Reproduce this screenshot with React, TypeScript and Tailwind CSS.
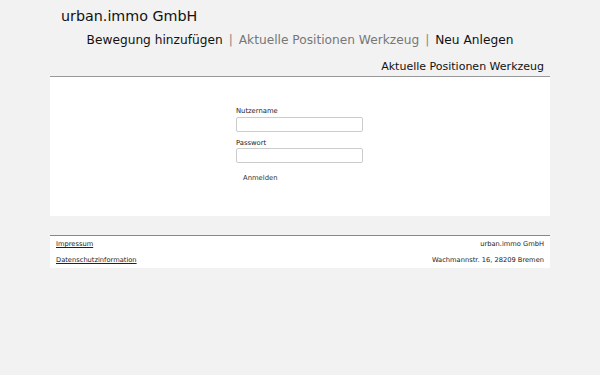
export default function App() {
  return (
    <div className="min-h-[375px] w-[600px] bg-[#f2f2f2] text-[#111] font-['DejaVu_Sans',sans-serif]">
      <div className="mx-auto w-[500px]">
        <header className="pt-[6px]">
          <h1 className="pl-[11px] text-[14.3px] leading-[20px]">urban.immo GmbH</h1>
          <nav className="mt-[5px] flex justify-center gap-[6px] text-[12.2px] leading-[18px]">
            <span>Bewegung hinzufügen</span>
            <span className="text-[#888]">|</span>
            <span className="text-[#777]">Aktuelle Positionen Werkzeug</span>
            <span className="text-[#888]">|</span>
            <span>Neu Anlegen</span>
          </nav>
          <div className="mt-[11px] pr-[6px] text-right text-[11px] leading-[14px]">
            Aktuelle Positionen Werkzeug
          </div>
        </header>

        <main className="mt-[2px] border-t border-[#999] bg-white">
          <form className="flex h-[139px] flex-col pl-[186px] pt-[30px] text-[6.8px] leading-[9px]">
            <label className="text-[#222]">Nutzername</label>
            <input className="mt-[1px] h-[15px] w-[127px] rounded-[2px] border border-[#ccc] bg-white" />
            <label className="mt-[7px] text-[#222]">Passwort</label>
            <input
              type="password"
              className="mt-0 h-[15px] w-[127px] rounded-[2px] border border-[#ccc] bg-white"
            />
            <button type="button" className="mt-[11px] w-fit pl-[7px] text-left text-[#333]">
              Anmelden
            </button>
          </form>
        </main>

        <footer className="mt-[19px] border-t border-[#888] bg-white px-[6px] pb-[2px] pt-[3px] text-[6.7px] leading-[9px] text-[#222]">
          <div className="flex justify-between py-[1px]">
            <a href="#" className="underline">Impressum</a>
            <span>urban.immo GmbH</span>
          </div>
          <div className="mt-[5px] flex justify-between py-[1px]">
            <a href="#" className="underline">Datenschutzinformation</a>
            <span>Wachmannstr. 16, 28209 Bremen</span>
          </div>
        </footer>
      </div>
    </div>
  );
}
